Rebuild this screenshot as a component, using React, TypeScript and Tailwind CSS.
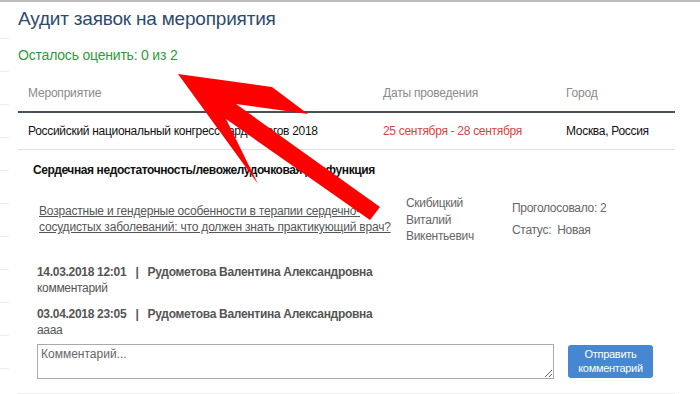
import React from "react";

const font = { fontFamily: '"Liberation Sans", Arial, sans-serif' };

function Arrow() {
  return (
    <svg
      className="pointer-events-none absolute left-0 top-0"
      width="700"
      height="394"
      viewBox="0 0 700 394"
    >
      <polygon
        fill="#ff0000"
        points="178,72 272,85 308,112 236,102 380,205 370,218 226,117 258,182"
      />
    </svg>
  );
}

function App() {
  const stripes = Array.from({ length: 11 });

  return (
    <div
      className="relative flex h-[394px] w-[700px] overflow-hidden border-t-2 border-[#bdbdbd] bg-white"
      style={font}
    >
      <div className="flex w-[9px] flex-col pt-[4px]">
        {stripes.map((_, i) => (
          <div key={i} className="h-[33px] shrink-0 border-b border-[#ececec]"></div>
        ))}
      </div>

      <div className="flex flex-1 flex-col pl-[9px] pr-[25px]">
        <h1 className="mt-[4px] text-[19px] leading-[26px] tracking-[-0.2px] text-[#2d4b6d]">
          Аудит заявок на мероприятия
        </h1>
        <div className="mt-[14px] text-[14px] leading-[18px] tracking-[-0.2px] text-[#2f9a3c]">
          Осталось оценить: 0 из 2
        </div>

        <div className="mt-[11px] flex h-[38px] items-center border-b-2 border-[#4a5058] text-[12px] tracking-[-0.2px] text-[#8a8a8a]">
          <div className="w-[355px] pl-[10px]">Мероприятие</div>
          <div className="w-[183px] pl-[10px]">Даты проведения</div>
          <div className="pl-[10px]">Город</div>
        </div>
        <div className="flex h-[37px] items-center border-b border-[#dedede] text-[12px] tracking-[-0.3px] text-[#111]">
          <div className="w-[355px] pl-[10px]">
            Российский национальный конгресс кардиологов 2018
          </div>
          <div className="w-[183px] pl-[10px] text-[#d9433f]">
            25 сентября - 28 сентября
          </div>
          <div className="pl-[10px]">Москва, Россия</div>
        </div>

        <div className="flex flex-1 flex-col border-b border-[#eeeeee] pl-[15px]">
          <div className="mt-[12px] text-[12px] font-bold leading-[16px] tracking-[-0.4px] text-[#111]">
            Сердечная недостаточность/левожелудочковая дисфункция
          </div>

          <div className="mt-[17px] flex text-[12px] text-[#555]">
            <div className="w-[373px] pl-[6px] pt-[8px] leading-[16px] tracking-[-0.2px]">
              <a className="underline" href="#">
                Возрастные и гендерные особенности в терапии сердечно-
                <br />
                сосудистых заболеваний: что должен знать практикующий врач?
              </a>
            </div>
            <div className="w-[106px] leading-[16.5px] tracking-[-0.3px] text-[#666]">
              Скибицкий
              <br />
              Виталий
              <br />
              Викентьевич
            </div>
            <div className="flex flex-col gap-[6px] pt-[5px] leading-[16px] tracking-[-0.3px] text-[#666]">
              <div>Проголосовало: 2</div>
              <div>Статус:&nbsp; Новая</div>
            </div>
          </div>

          <div className="mt-[19px] flex flex-col pl-[4px] text-[12px] leading-[16px] tracking-[-0.3px] text-[#555]">
            <div className="font-bold">
              14.03.2018 12:01&nbsp;&nbsp; |&nbsp;&nbsp; Рудометова Валентина Александровна
            </div>
            <div>комментарий</div>
            <div className="mt-[10px] font-bold">
              03.04.2018 23:05&nbsp;&nbsp; |&nbsp;&nbsp; Рудометова Валентина Александровна
            </div>
            <div>аааа</div>
          </div>

          <div className="mt-[6px] flex items-start pl-[4px]">
            <textarea
              className="h-[35px] w-[517px] resize border border-[#aaaaaa] px-[3px] py-[1px] text-[12px] leading-[16px] text-[#333] placeholder:text-[#666]"
              placeholder="Комментарий..."
              style={font}
            ></textarea>
            <button
              className="ml-[14px] mt-[1px] h-[33px] w-[85px] rounded-[3px] bg-[#4587d0] text-[11px] leading-[14px] tracking-[-0.3px] text-white"
              style={font}
            >
              Отправить
              <br />
              комментарий
            </button>
          </div>
        </div>
      </div>

      <Arrow />
    </div>
  );
}

export default App;
